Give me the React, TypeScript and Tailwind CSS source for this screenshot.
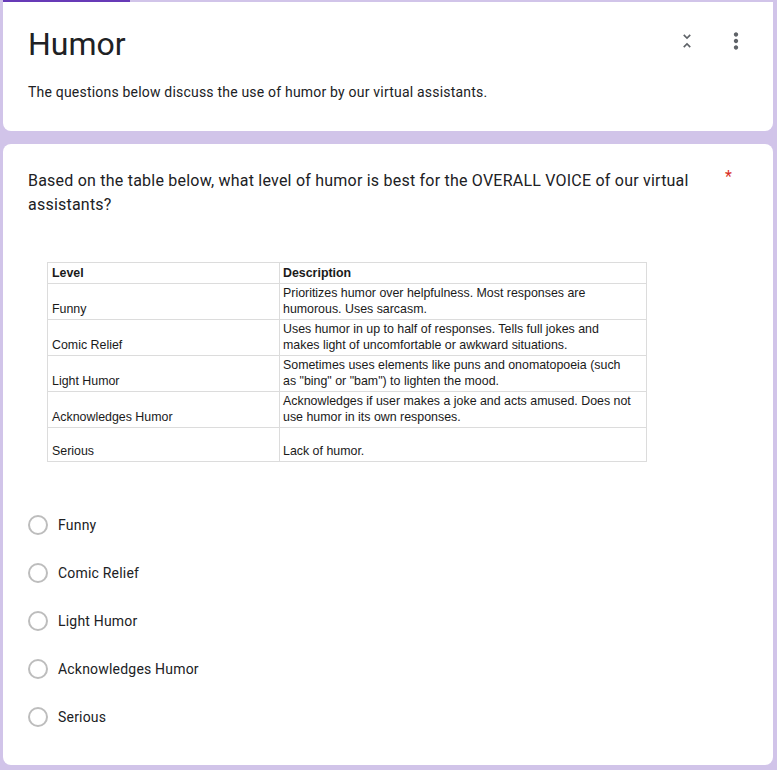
import React from 'react';

const rows = [
  { level: 'Funny', desc: ['Prioritizes humor over helpfulness. Most responses are', 'humorous. Uses sarcasm.'] },
  { level: 'Comic Relief', desc: ['Uses humor in up to half of responses. Tells full jokes and', 'makes light of uncomfortable or awkward situations.'] },
  { level: 'Light Humor', desc: ['Sometimes uses elements like puns and onomatopoeia (such', 'as "bing" or "bam") to lighten the mood.'] },
  { level: 'Acknowledges Humor', desc: ['Acknowledges if user makes a joke and acts amused. Does not', 'use humor in its own responses.'] },
  { level: 'Serious', desc: ['Lack of humor.'] },
];

const options = ['Funny', 'Comic Relief', 'Light Humor', 'Acknowledges Humor', 'Serious'];

function UnfoldLess() {
  return (
    <svg width="20" height="20" viewBox="0 0 24 24" fill="#5f6368">
      <path d="M7.41 18.59L8.83 20 12 16.83 15.17 20l1.41-1.41L12 14l-4.59 4.59zm9.18-13.18L15.17 4 12 7.17 8.83 4 7.41 5.41 12 10l4.59-4.59z" />
    </svg>
  );
}

function MoreVert() {
  return (
    <svg width="26" height="26" viewBox="0 0 24 24" fill="#5f6368">
      <path d="M12 8c1.1 0 2-.9 2-2s-.9-2-2-2-2 .9-2 2 .9 2 2 2zm0 2c-1.1 0-2 .9-2 2s.9 2 2 2 2-.9 2-2-.9-2-2-2zm0 6c-1.1 0-2 .9-2 2s.9 2 2 2 2-.9 2-2-.9-2-2-2z" />
    </svg>
  );
}

export default function App() {
  return (
    <div className="min-h-[770px] bg-[#d1c4e9] pl-[3px] pr-[4px] font-['Roboto',sans-serif] text-[#202124]">
      {/* top accent */}
      <div className="flex h-[2px]">
        <div className="w-[127px] bg-[#673ab7]" />
      </div>

      {/* header card */}
      <div className="h-[129px] rounded-b-lg bg-white pl-[25px] pr-[24px] pt-[22px]">
        <div className="flex items-start justify-between">
          <h1 className="text-[32px] leading-[40px] font-normal">Humor</h1>
          <div className="flex items-center gap-[26px] pt-[4px]">
            <UnfoldLess />
            <MoreVert />
          </div>
        </div>
        <p className="mt-[18px] text-[14px] leading-[20px] tracking-[0.2px]">
          The questions below discuss the use of humor by our virtual assistants.
        </p>
      </div>

      {/* question card */}
      <div className="mt-[13px] h-[621px] rounded-lg bg-white pl-[25px] pt-[25px]">
        <div className="flex items-start">
          <p className="w-[690px] text-[16px] leading-[24px] tracking-[0.22px]">
            Based on the table below, what level of humor is best for the OVERALL VOICE of our virtual assistants?
          </p>
          <span className="ml-[7px] text-[16px] leading-[16px] text-[#d93025]">*</span>
        </div>

        <div className="ml-[19px] mt-[45px] w-[600px] font-['Liberation_Sans',Arial,sans-serif] text-[12.4px] text-[#1a1a1a]">
          <table className="w-full border-collapse">
            <tbody>
              <tr className="h-[21px]">
                <td className="w-[232px] border border-[#dcdcdc] px-[4px] align-bottom font-bold leading-[15px] pb-[2px]">Level</td>
                <td className="border border-[#dcdcdc] px-[3px] align-bottom font-bold leading-[15px] pb-[2px]">Description</td>
              </tr>
              {rows.map((r) => (
                <tr key={r.level} className={r.level === 'Serious' ? 'h-[34px]' : 'h-[36px]'}>
                  <td className="border border-[#dcdcdc] px-[4px] align-bottom leading-[16px] pb-[2px]">{r.level}</td>
                  <td className="border border-[#dcdcdc] px-[3px] align-bottom leading-[16px] pb-[2px]">
                    {r.desc.map((d, i) => (
                      <div key={i} className="whitespace-nowrap">{d}</div>
                    ))}
                  </td>
                </tr>
              ))}
            </tbody>
          </table>
        </div>

        <div className="mt-[39px] flex flex-col">
          {options.map((o) => (
            <div key={o} className="flex h-[48px] items-center">
              <div className="h-[20px] w-[20px] rounded-full border-2 border-[#bdbdbd]" />
              <span className="ml-[10px] text-[14px] leading-[20px] tracking-[0.2px]">{o}</span>
            </div>
          ))}
        </div>
      </div>
    </div>
  );
}
